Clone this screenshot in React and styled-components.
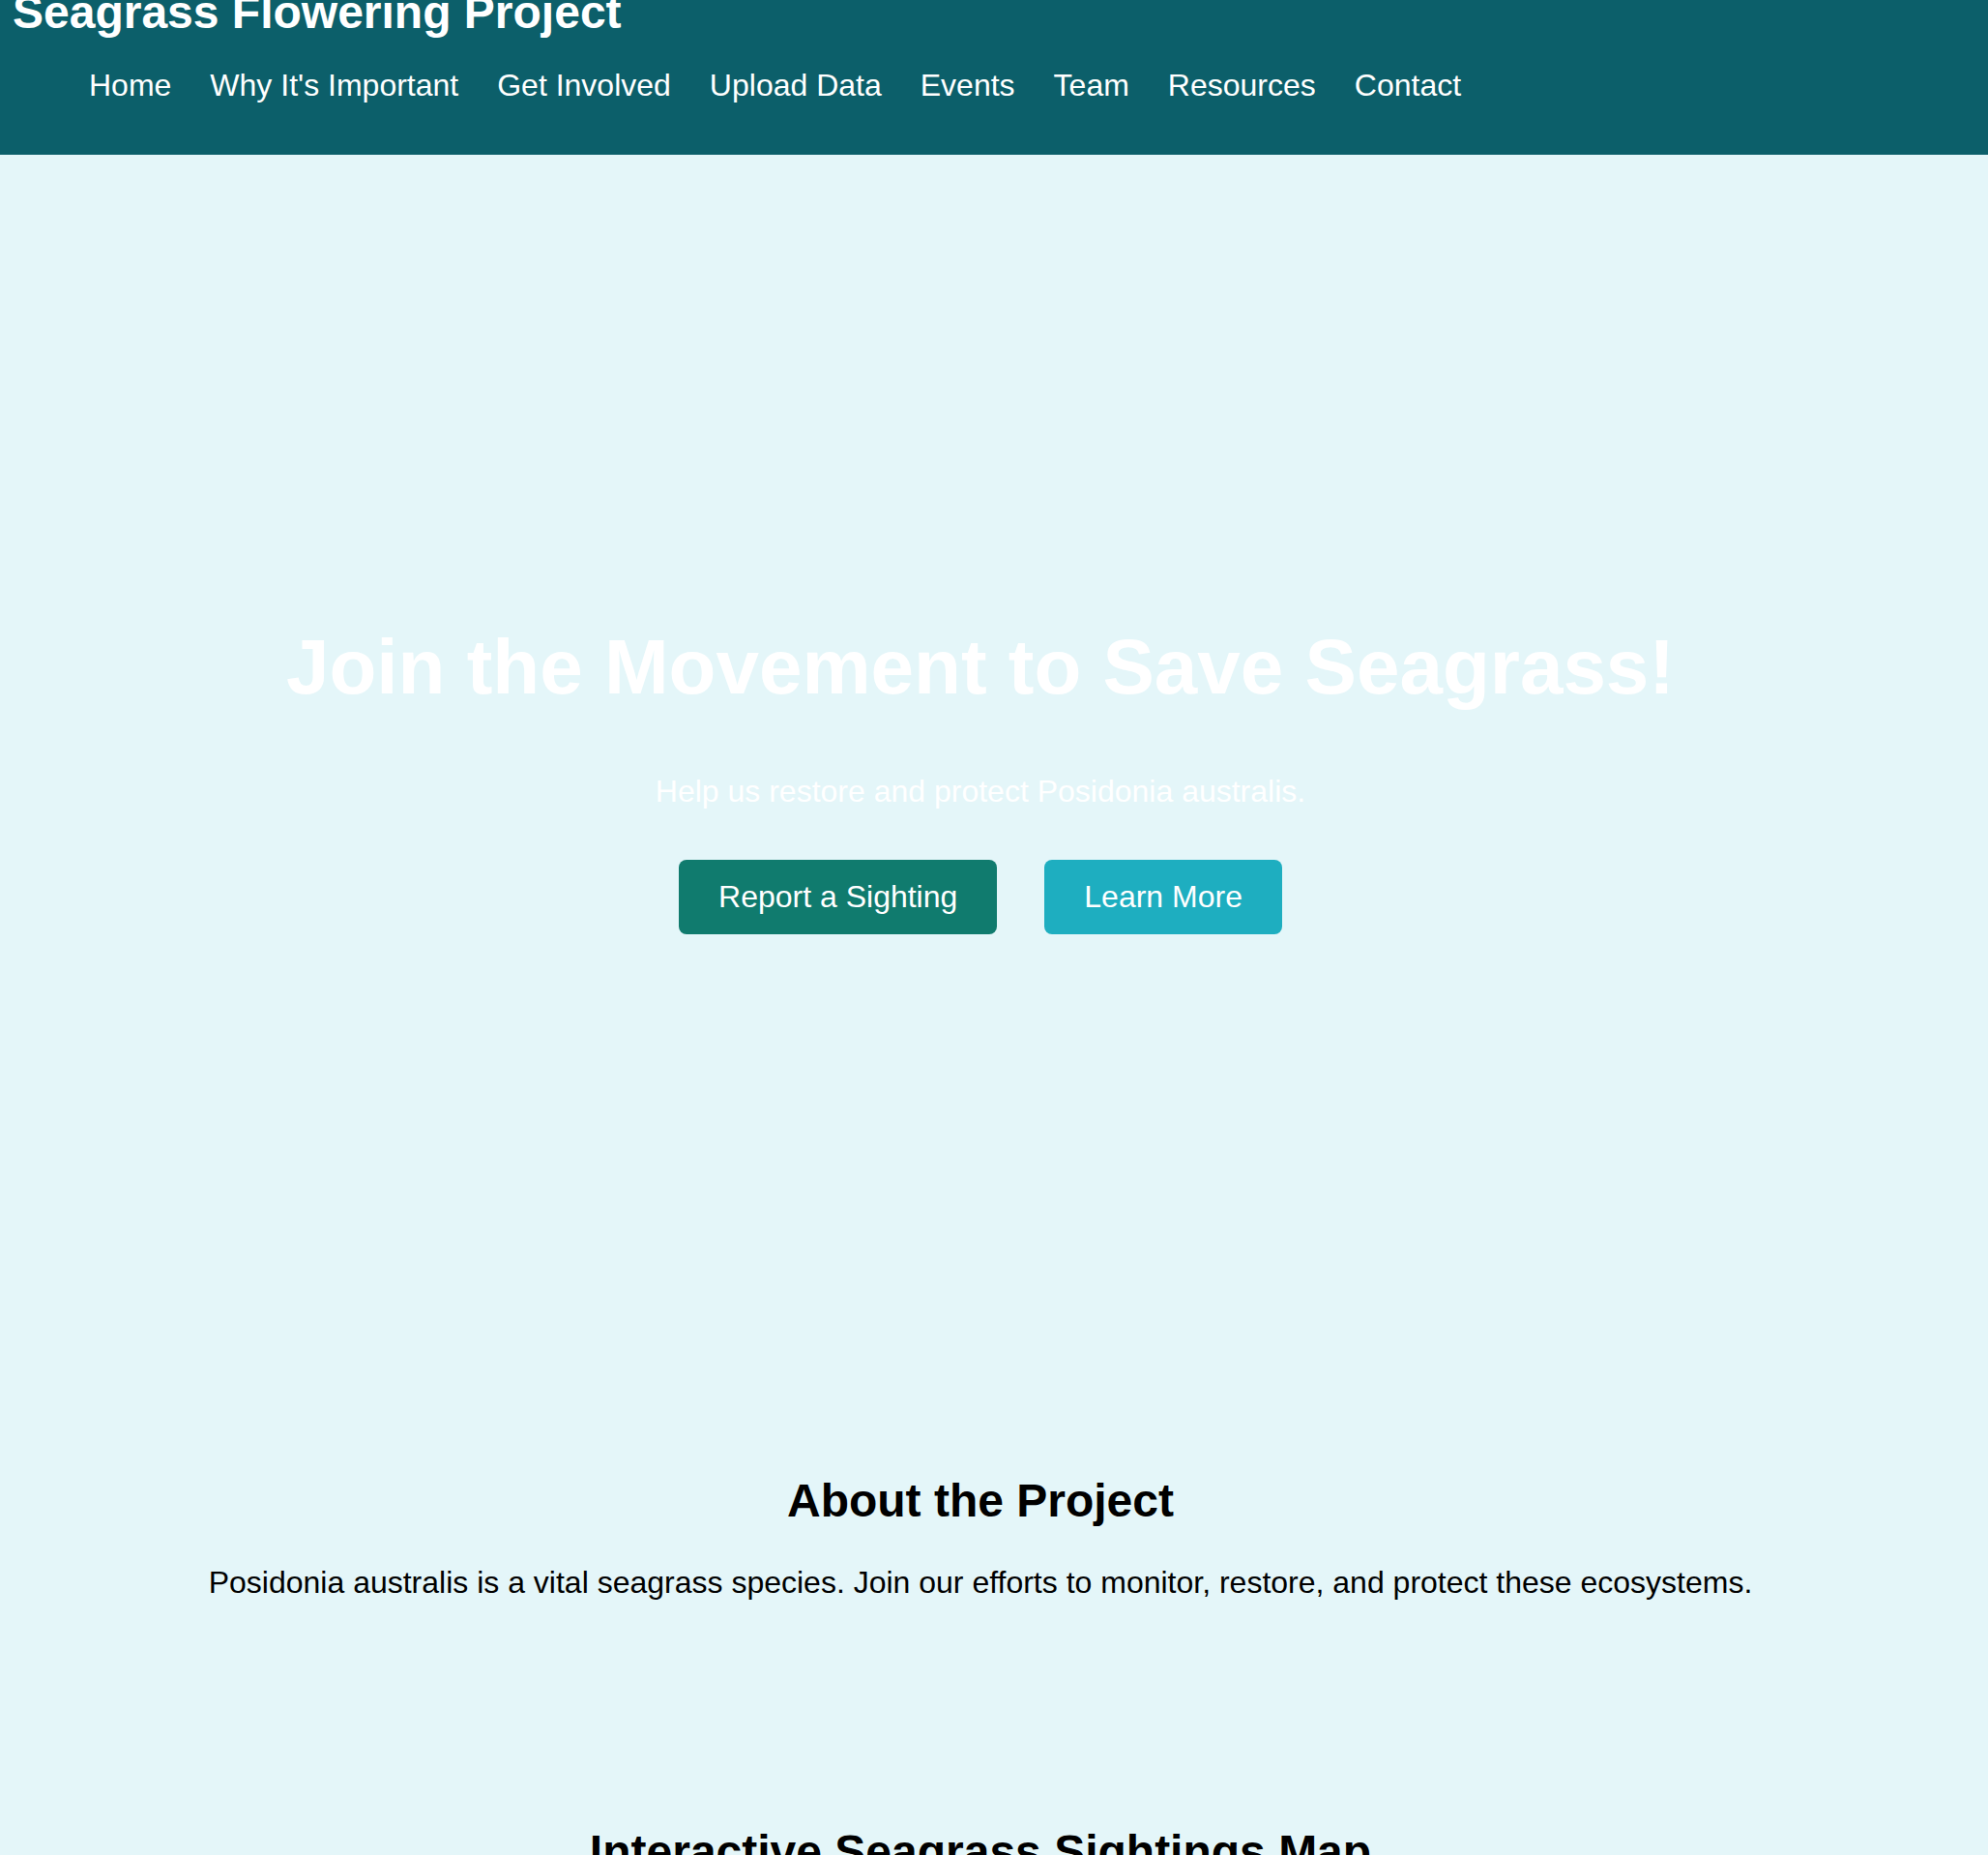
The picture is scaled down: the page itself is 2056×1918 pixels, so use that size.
import React from "react";
import styled, { createGlobalStyle } from "styled-components";

const Global = createGlobalStyle`
  html, body { margin: 0; padding: 0; }
  body {
    background: #e4f6f9;
    font-family: "Liberation Sans", Arial, Helvetica, sans-serif;
    color: #000;
    overflow: hidden;
  }
`;

const Header = styled.header`
  background: #0c5f6a;
  color: #fff;
  padding: 0 13px 53px;
  height: 160px;
  box-sizing: border-box;
  overflow: hidden;
`;

const SiteTitle = styled.h1`
  margin: -15px 0 0;
  font-size: 48px;
  font-weight: 700;
  line-height: normal;
`;

const NavList = styled.ul`
  list-style: none;
  display: flex;
  gap: 40px;
  margin: 30px 0 0;
  padding: 0 0 0 79px;
`;

const NavLink = styled.a`
  color: #fff;
  text-decoration: none;
  font-size: 32px;
  line-height: normal;
`;

const Main = styled.main`
  padding-right: 28px;
`;

const Hero = styled.section`
  height: 1244px;
  box-sizing: border-box;
  padding-top: 484px;
  display: flex;
  flex-direction: column;
  align-items: center;
  text-align: center;
`;

const HeroTitle = styled.h2`
  margin: 0;
  font-size: 80px;
  font-weight: 700;
  color: #fff;
  line-height: normal;
`;

const HeroText = styled.p`
  margin: 64px 0 0;
  font-size: 32px;
  color: #fff;
  line-height: normal;
`;

const ButtonRow = styled.div`
  display: flex;
  gap: 49px;
  margin-top: 52px;
`;

const Button = styled.a`
  display: inline-block;
  padding: 20px 41px;
  border-radius: 8px;
  font-size: 32px;
  line-height: normal;
  color: #fff;
  text-decoration: none;
  background: ${(p) => (p.$variant === "secondary" ? "#1eaec0" : "#107b6e")};
`;

const Section = styled.section`
  padding: 120px 0 112px;
  text-align: center;
`;

const SectionTitle = styled.h2`
  margin: 0 0 39px;
  font-size: 48px;
  font-weight: 700;
  line-height: normal;
`;

const SectionText = styled.p`
  margin: 0;
  font-size: 32px;
  line-height: normal;
`;

const navItems = [
  "Home",
  "Why It's Important",
  "Get Involved",
  "Upload Data",
  "Events",
  "Team",
  "Resources",
  "Contact",
];

export default function App() {
  return (
    <>
      <Global />
      <Header>
        <SiteTitle>Seagrass Flowering Project</SiteTitle>
        <nav>
          <NavList>
            {navItems.map((item) => (
              <li key={item}>
                <NavLink href="#">{item}</NavLink>
              </li>
            ))}
          </NavList>
        </nav>
      </Header>
      <Main>
        <Hero>
          <HeroTitle>Join the Movement to Save Seagrass!</HeroTitle>
          <HeroText>Help us restore and protect Posidonia australis.</HeroText>
          <ButtonRow>
            <Button href="#">Report a Sighting</Button>
            <Button href="#" $variant="secondary">
              Learn More
            </Button>
          </ButtonRow>
        </Hero>
        <Section>
          <SectionTitle>About the Project</SectionTitle>
          <SectionText>
            Posidonia australis is a vital seagrass species. Join our efforts to
            monitor, restore, and protect these ecosystems.
          </SectionText>
        </Section>
        <Section>
          <SectionTitle>Interactive Seagrass Sightings Map</SectionTitle>
        </Section>
      </Main>
    </>
  );
}
